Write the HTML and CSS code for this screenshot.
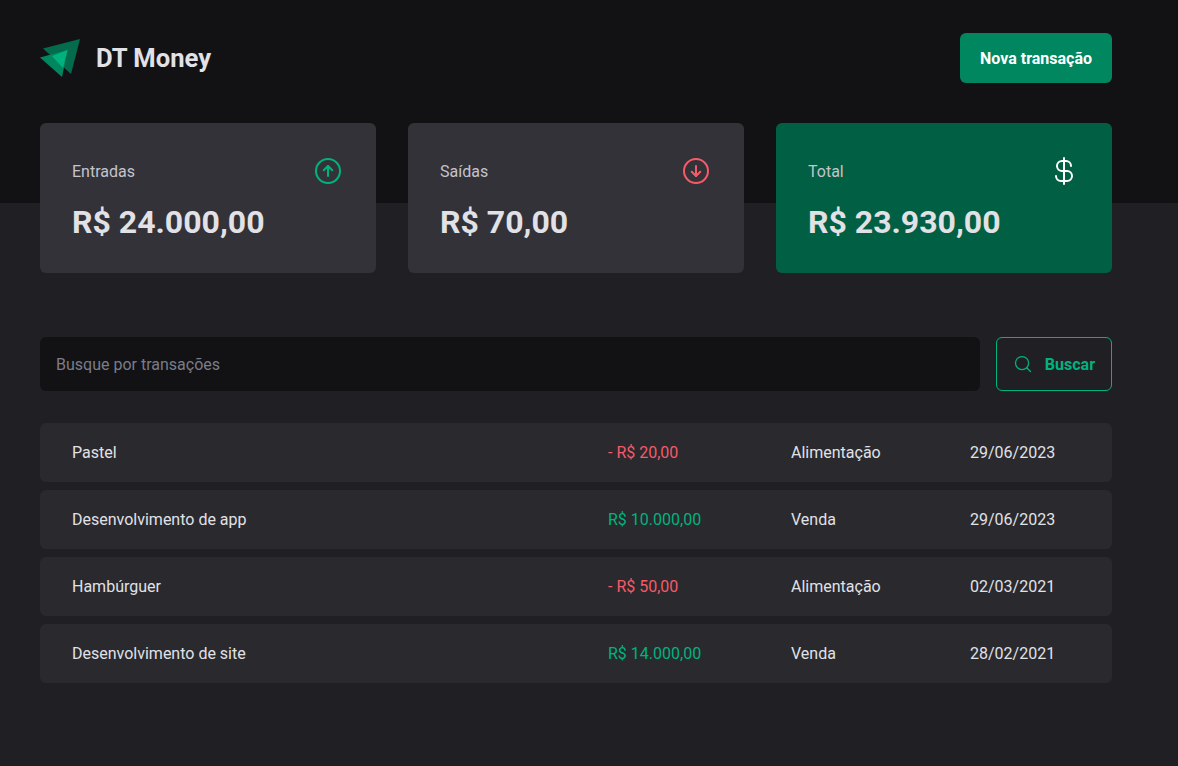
FILE: index.html
```html
<!DOCTYPE html>
<html lang="pt-BR">
<head>
<meta charset="utf-8">
<title>DT Money</title>
<link rel="stylesheet" href="styles.css">
</head>
<body>
<div class="page">
  <header class="top">
    <div class="top-inner">
      <div class="brand">
        <svg class="logo" viewBox="0 0 40 38" width="40" height="38">
          <polygon points="40,0 3,9.5 31,35" fill="#046c4d"/>
          <polygon points="0,18.5 22,38 27.5,11" fill="#00875f"/>
          <polygon points="12,17 27.5,11 23,29" fill="#00b37e"/>
        </svg>
        <span class="brand-name">DT Money</span>
      </div>
      <button class="new-btn">Nova transação</button>
    </div>
  </header>

  <main class="content">
    <section class="cards">
      <div class="card">
        <div class="card-head"><span>Entradas</span>
          <svg class="icon" viewBox="0 0 256 256" width="32" height="32" fill="none" stroke="#00b37e" stroke-width="16" stroke-linecap="round" stroke-linejoin="round"><circle cx="128" cy="128" r="96"/><polyline points="94 122 128 88 162 122"/><line x1="128" y1="168" x2="128" y2="88"/></svg>
        </div>
        <strong class="value">R$ 24.000,00</strong>
      </div>
      <div class="card">
        <div class="card-head"><span>Saídas</span>
          <svg class="icon" viewBox="0 0 256 256" width="32" height="32" fill="none" stroke="#f75a68" stroke-width="16" stroke-linecap="round" stroke-linejoin="round"><circle cx="128" cy="128" r="96"/><polyline points="94 134 128 168 162 134"/><line x1="128" y1="88" x2="128" y2="168"/></svg>
        </div>
        <strong class="value">R$ 70,00</strong>
      </div>
      <div class="card card-total">
        <div class="card-head"><span>Total</span>
          <svg class="icon" viewBox="0 0 256 256" width="32" height="32" fill="none" stroke="#fff" stroke-width="16" stroke-linecap="round" stroke-linejoin="round"><line x1="128" y1="24" x2="128" y2="232"/><path d="M184 88a40 40 0 0 0-40-40h-32a40 40 0 0 0 0 80h40a40 40 0 0 1 0 80h-48a40 40 0 0 1-40-40"/></svg>
        </div>
        <strong class="value">R$ 23.930,00</strong>
      </div>
    </section>

    <form class="search">
      <input class="search-input" type="text" placeholder="Busque por transações">
      <button class="search-btn" type="button">
        <svg viewBox="0 0 256 256" width="20" height="20" fill="none" stroke="currentColor" stroke-width="16" stroke-linecap="round" stroke-linejoin="round"><circle cx="116" cy="116" r="84"/><line x1="175.4" y1="175.4" x2="224" y2="224"/></svg>
        Buscar
      </button>
    </form>

    <table class="list">
      <colgroup><col class="c-desc"><col class="c-price"><col class="c-cat"><col class="c-date"></colgroup>
      <tbody>
        <tr><td>Pastel</td><td class="out">- R$ 20,00</td><td>Alimentação</td><td>29/06/2023</td></tr>
        <tr><td>Desenvolvimento de app</td><td class="in">R$ 10.000,00</td><td>Venda</td><td>29/06/2023</td></tr>
        <tr><td>Hambúrguer</td><td class="out">- R$ 50,00</td><td>Alimentação</td><td>02/03/2021</td></tr>
        <tr><td>Desenvolvimento de site</td><td class="in">R$ 14.000,00</td><td>Venda</td><td>28/02/2021</td></tr>
      </tbody>
    </table>
  </main>
</div>
</body>
</html>
```
FILE: styles.css
```css
* { box-sizing: border-box; margin: 0; padding: 0; }
html, body { height: 100%; }
body {
  background: #202024;
  color: #e1e1e6;
  font: 400 16px Roboto, "Liberation Sans", sans-serif;
  -webkit-font-smoothing: antialiased;
}
.top { background: #121214; height: 203px; padding-top: 33px; }
.top-inner { width: 1072px; margin-left: 40px; display: flex; justify-content: space-between; align-items: center; }
.brand { display: flex; align-items: center; gap: 16px; }
.logo { display: block; }
.brand-name { font-size: 25.6px; font-weight: 700; }
.new-btn {
  height: 50px; padding: 0 20px; border: 0; border-radius: 6px;
  background: #00875f; color: #fff;
  font: 700 16px Roboto, sans-serif;
}
.content { width: 1072px; margin-left: 40px; }
.cards {
  display: grid; grid-template-columns: repeat(3, 1fr); gap: 32px;
  margin-top: -80px;
}
.card { background: #323238; border-radius: 6px; padding: 32px; height: 150px; }
.card-total { background: #015f43; }
.card-head { display: flex; justify-content: space-between; align-items: center; color: #c4c4cc; }
.icon { display: block; }
.value { display: block; margin-top: 16px; font-size: 32px; font-weight: 700; }
.search { display: flex; gap: 16px; margin-top: 64px; }
.search-input {
  flex: 1; height: 54px; padding: 16px; border: 0; border-radius: 6px;
  background: #121214; color: #c4c4cc;
  font: 400 16px Roboto, sans-serif;
}
.search-input::placeholder { color: #7c7c8a; opacity: 1; }
.search-btn {
  display: flex; align-items: center; gap: 12px;
  height: 54px; padding: 0 16px; border: 1px solid #00b37e; border-radius: 6px;
  background: transparent; color: #00b37e;
  font: 700 16px Roboto, sans-serif;
}
.list {
  width: 100%; table-layout: fixed; border-collapse: separate; border-spacing: 0 8px;
  margin-top: 24px;
}
.c-desc { width: 568px; }
.c-price { width: 183px; }
.c-cat { width: 179px; }
.list td { background: #29292e; padding: 20px 0; line-height: 19px; }
.list td:first-child { padding-left: 32px; border-radius: 6px 0 0 6px; }
.list td:last-child { border-radius: 0 6px 6px 0; }
.in { color: #00b37e; }
.out { color: #f75a68; }
```
